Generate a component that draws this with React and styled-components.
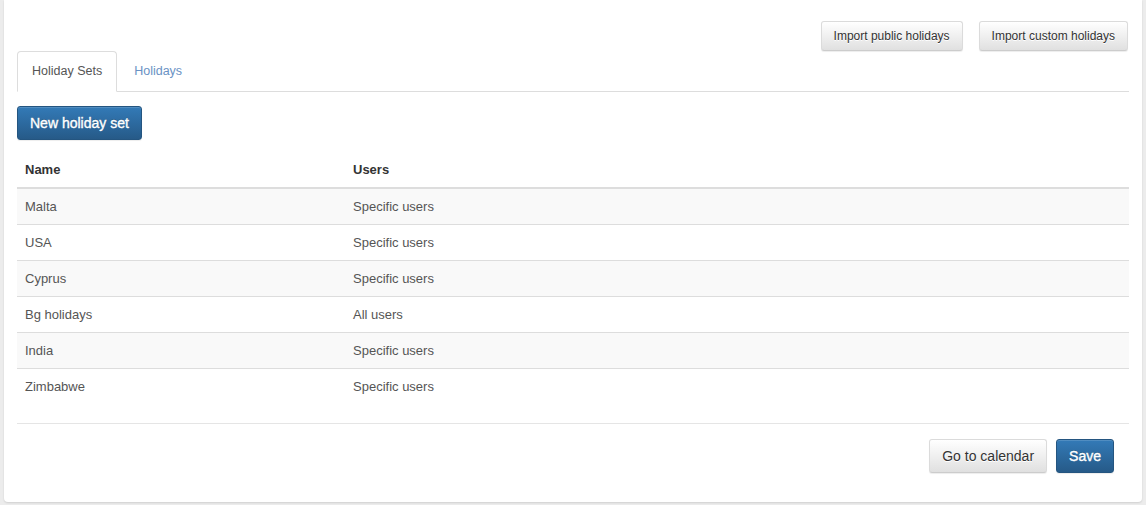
import React from "react";
import styled, { createGlobalStyle, css } from "styled-components";

const GlobalStyle = createGlobalStyle`
  html, body {
    margin: 0;
    padding: 0;
    background: #ececec;
    font-family: "Liberation Sans", Arial, sans-serif;
    color: #333;
  }
`;

const Card = styled.div`
  margin: 0 4px 4px;
  background: #fff;
  border-radius: 0 0 4px 4px;
  box-shadow: 0 1px 2px rgba(0, 0, 0, 0.12);
  padding: 21px 13px 29px;
`;

const TopBar = styled.div`
  display: flex;
  justify-content: flex-end;
  gap: 16px;
  padding-right: 1px;
`;

const Button = styled.button`
  font-family: inherit;
  cursor: pointer;
  border-radius: 3px;
  border: 1px solid #ccc;
  ${props =>
    props.size === "sm"
      ? css`
          font-size: 12px;
          line-height: 18px;
          padding: 5px 12px;
        `
      : css`
          font-size: 14px;
          line-height: 20px;
          padding: 6px 12px;
        `};
  ${props =>
    props.primary
      ? css`
          color: #fff;
          font-weight: 400;
          -webkit-text-stroke: 0.35px #fff;
          background: linear-gradient(to bottom, #337ab7 0, #265a88 100%);
          border-color: #245580;
          text-shadow: 0 -1px 0 rgba(0, 0, 0, 0.2);
          box-shadow: inset 0 1px 0 rgba(255, 255, 255, 0.15),
            0 1px 1px rgba(0, 0, 0, 0.075);
        `
      : css`
          color: #333;
          background: linear-gradient(to bottom, #fff 0, #e0e0e0 100%);
          border-color: #dbdbdb #dbdbdb #ccc;
          text-shadow: 0 1px 0 #fff;
          box-shadow: inset 0 1px 0 rgba(255, 255, 255, 0.15),
            0 1px 1px rgba(0, 0, 0, 0.075);
        `};
`;

const Tabs = styled.ul`
  display: flex;
  list-style: none;
  margin: 0;
  padding: 0;
  border-bottom: 1px solid #ddd;
  font-size: 12.5px;
`;

const Tab = styled.li`
  margin: 0 2px -1px 0;
  padding: 10px 14px;
  line-height: 18.57px;
  border: 1px solid transparent;
  border-radius: 4px 4px 0 0;
  color: ${props => (props.active ? "#555" : "#6a92c4")};
  ${props =>
    props.active &&
    css`
      background: #fff;
      border-color: #ddd #ddd transparent;
    `};
`;

const Toolbar = styled.div`
  margin-top: 14px;
`;

const Table = styled.table`
  width: 100%;
  margin-top: 12px;
  border-collapse: collapse;
  font-size: 13px;
  line-height: 19px;

  th {
    text-align: left;
    font-weight: bold;
    color: #333;
    padding: 8px;
    border-bottom: 2px solid #ddd;
  }
  td {
    padding: 8px;
    color: #555;
    border-top: 1px solid #ddd;
  }
  tbody tr:first-child td {
    border-top: 0;
  }
  tbody tr:nth-child(odd) {
    background: #f9f9f9;
  }
`;

const Divider = styled.hr`
  border: 0;
  border-top: 1px solid #e5e5e5;
  margin: 19px 0 15px;
`;

const Footer = styled.div`
  display: flex;
  justify-content: flex-end;
  gap: 9px;
  padding-right: 15px;
`;

const rows = [
  ["Malta", "Specific users"],
  ["USA", "Specific users"],
  ["Cyprus", "Specific users"],
  ["Bg holidays", "All users"],
  ["India", "Specific users"],
  ["Zimbabwe", "Specific users"],
];

export default function App() {
  return (
    <>
      <GlobalStyle />
      <Card>
        <TopBar>
          <Button size="sm">Import public holidays</Button>
          <Button size="sm">Import custom holidays</Button>
        </TopBar>
        <Tabs>
          <Tab active>Holiday Sets</Tab>
          <Tab>Holidays</Tab>
        </Tabs>
        <Toolbar>
          <Button primary>New holiday set</Button>
        </Toolbar>
        <Table>
          <thead>
            <tr>
              <th style={{ width: 312 }}>Name</th>
              <th>Users</th>
            </tr>
          </thead>
          <tbody>
            {rows.map(([name, users]) => (
              <tr key={name}>
                <td>{name}</td>
                <td>{users}</td>
              </tr>
            ))}
          </tbody>
        </Table>
        <Divider />
        <Footer>
          <Button>Go to calendar</Button>
          <Button primary>Save</Button>
        </Footer>
      </Card>
    </>
  );
}
